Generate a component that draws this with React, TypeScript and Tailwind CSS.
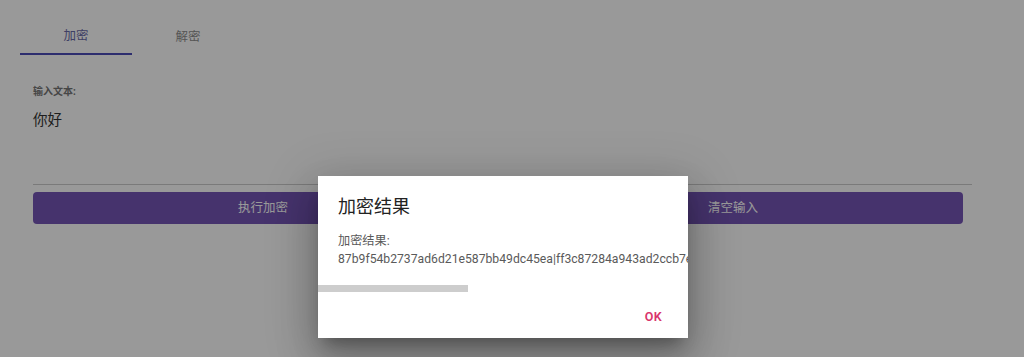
import React from 'react';

const hash =
  '87b9f54b2737ad6d21e587bb49dc45ea|ff3c87284a943ad2ccb7e1a9b04c6d35f82e7a91c3d05b6e4f18a2c97d3e05b1a46c';

export default function App() {
  return (
    <div
      className="relative w-[1024px] h-[357px] overflow-hidden bg-white"
      style={{ fontFamily: 'Roboto, "Noto Sans CJK SC", sans-serif' }}
    >
      {/* page */}
      <div className="px-5 pt-5">
        {/* tabs */}
        <div className="flex">
          <div className="w-[112px] h-[35px] flex items-center justify-center text-[12.5px] text-[#6a6aa8] border-b-2 border-[#4b4bb8]">
            加密
          </div>
          <div className="w-[112px] h-[35px] flex items-center justify-center text-[12.5px] text-[#8e8e8e]">
            解密
          </div>
        </div>

        <div className="px-[13px] pt-[30px]">
          <div className="text-[10px] font-bold text-[#757575] leading-[14px]">输入文本:</div>
          <div className="mt-[14px] text-[14.5px] text-[#333] leading-[16px]">你好</div>
          <div className="mt-[55px] h-px bg-[#cbcbcb] mr-[19px]"></div>
          <div className="mt-[7px] mr-[28px] flex gap-[10px]">
            <button className="flex-1 h-[32px] rounded bg-[#7555b6] text-white text-[12.5px]">
              执行加密
            </button>
            <button className="flex-1 h-[32px] rounded bg-[#7555b6] text-white text-[12.5px]">
              清空输入
            </button>
          </div>
        </div>
      </div>

      {/* overlay */}
      <div className="absolute inset-0 bg-black/40"></div>

      {/* dialog */}
      <div className="absolute left-[318px] top-[176px] w-[370px] h-[162px] bg-white shadow-[0_11px_15px_-7px_rgba(0,0,0,0.3),0_24px_38px_3px_rgba(0,0,0,0.2),0_9px_46px_8px_rgba(0,0,0,0.15)] flex flex-col">
        <div className="px-5 pt-[19px] text-[18px] text-[#222] leading-[24px]">加密结果</div>
        <div className="overflow-hidden mt-[13px]">
          <div className="px-5 text-[12.2px] text-[#5a5a5a] leading-[18px] whitespace-nowrap">
            <div>加密结果:</div>
            <div>{hash}</div>
          </div>
        </div>
        <div className="mt-[17px] w-[150px] h-[7px] bg-[#cdcdcd]"></div>
        <div className="flex justify-end px-[18px] mt-[13px]">
          <button className="px-2 h-[24px] text-[12.5px] font-semibold text-[#d9336b] tracking-wide">
            OK
          </button>
        </div>
      </div>
    </div>
  );
}
